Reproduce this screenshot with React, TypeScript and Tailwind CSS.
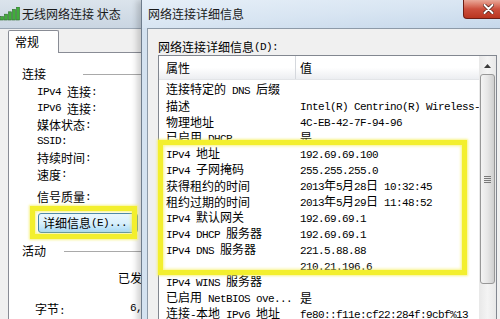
import React from 'react';

const Mix: React.FC<{ t: string }> = ({ t }) => {
  const parts = t.split(/([\x00-\x7f]+)/).filter(Boolean);
  return (
    <>
      {parts.map((p, i) =>
        /^[\x00-\x7f]+$/.test(p) ? (
          <span key={i} className="font-['Liberation_Mono'] text-[11px] tracking-[-0.6px]">
            {p}
          </span>
        ) : (
          <span key={i} className="text-[12px]">
            {p}
          </span>
        )
      )}
    </>
  );
};

const leftLabels = ['IPv4 连接:', 'IPv6 连接:', '媒体状态:', 'SSID:', '持续时间:', '速度:'];

const details: [string, string][] = [
  ['连接特定的 DNS 后缀', ''],
  ['描述', 'Intel(R) Centrino(R) Wireless-'],
  ['物理地址', '4C-EB-42-7F-94-96'],
  ['已启用 DHCP', '是'],
  ['IPv4 地址', '192.69.69.100'],
  ['IPv4 子网掩码', '255.255.255.0'],
  ['获得租约的时间', '2013年5月28日 10:32:45'],
  ['租约过期的时间', '2013年5月29日 11:48:52'],
  ['IPv4 默认网关', '192.69.69.1'],
  ['IPv4 DHCP 服务器', '192.69.69.1'],
  ['IPv4 DNS 服务器', '221.5.88.88'],
  ['', '210.21.196.6'],
  ['IPv4 WINS 服务器', ''],
  ['已启用 NetBIOS ove...', '是'],
  ['连接-本地 IPv6 地址', 'fe80::f11e:cf22:284f:9cbf%13'],
];

const SignalIcon = () => (
  <svg width="21" height="14" viewBox="0 0 21 14">
    {[0, 1, 2, 3, 4].map((i) => (
      <rect
        key={i}
        x={i * 4 + 0.5}
        y={12 - (i + 1) * 2.4}
        width="3"
        height={(i + 1) * 2.4 + 1}
        fill="#3fae3a"
        stroke="#2d6b2a"
        strokeWidth="0.6"
      />
    ))}
  </svg>
);

const StatusWindow = () => (
  <div className="absolute left-0 top-0 w-[180px] h-[340px] flex flex-col">
    {/* title */}
    <div className="h-[28px] flex items-center bg-gradient-to-b from-[#dbe4ec] to-[#cad6e2] text-[#1a1a1a]">
      <SignalIcon />
      <span className="ml-[1px] text-[12px] leading-none">无线网络连接 状态</span>
    </div>
    <div className="flex-1 flex flex-col bg-[#f0f0f0] border-t border-[#9aa6b4] pt-[1px] pl-[8px]">
      <div className="h-[23px] flex">
        <div className="w-[51px] h-[23px] border border-b-0 border-[#898c95] bg-white rounded-t-[2px] flex items-center pl-[6px] text-[12px] leading-none relative z-10">
          常规
        </div>
      </div>
      <div className="flex-1 -mt-px border border-[#898c95] bg-white flex flex-col whitespace-pre leading-none">
        <div className="mt-[13px] h-[16px] flex items-center pl-[13px]">
          <span className="w-[61px] text-[12px]">连接</span>
          <div className="flex-1 h-px bg-[#a9a9a9]" />
        </div>
        <div className="mt-[2px] flex flex-col pl-[28px]">
          {leftLabels.map((l) => (
            <div key={l} className="h-[16.5px] flex items-center">
              <Mix t={l} />
            </div>
          ))}
        </div>
        <div className="mt-[6px] h-[16px] flex items-center pl-[28px]">
          <Mix t="信号质量:" />
        </div>
        <div className="mt-[8px] ml-[29px] w-[100px] h-[20px] rounded-[3px] border border-[#3c7fb1] bg-gradient-to-b from-[#eaf6fd] via-[#d9f0fc] to-[#a7d9f5] flex items-center pl-[4px]">
          <Mix t="详细信息(E)..." />
        </div>
        <div className="mt-[10px] h-[16px] flex items-center pl-[13px]">
          <span className="w-[42px] text-[12px]">活动</span>
          <div className="flex-1 h-px bg-[#a9a9a9]" />
        </div>
        <div className="mt-[11px] h-[16px] flex items-center pl-[109px]">
          <span className="text-[12px]">已发送</span>
        </div>
        <div className="mt-[14px] h-[16px] flex items-center pl-[26px]">
          <span className="w-[95px]">
            <Mix t="字节:" />
          </span>
          <Mix t="6,520" />
        </div>
      </div>
    </div>
  </div>
);

const DetailsWindow = () => (
  <div className="absolute left-[141px] top-0 w-[380px] h-[340px] flex flex-col border-l border-[#6e7c8c] bg-gradient-to-r from-[#d4e2f0] to-[#c6d8ea] shadow-[-4px_0_6px_rgba(0,0,0,0.18)]">
    {/* title */}
    <div className="h-[28px] flex items-center pl-[6px] bg-gradient-to-br from-[#e6eff8] via-[#d8e5f2] to-[#c5d7ea] relative">
      <span className="text-[12px] leading-none text-[#1a1a1a]">网络连接详细信息</span>
      <div className="absolute left-[321px] top-0 w-[46px] h-[19px] rounded-bl-[4px] border border-t-0 border-[#6d1d14] bg-gradient-to-b from-[#e9a899] via-[#cc4f3d] to-[#b9351f] flex items-center pl-[19px]">
        <svg width="11" height="10" viewBox="0 0 11 10">
          <path d="M1.5 1 L9.5 9 M9.5 1 L1.5 9" stroke="#4a1a12" strokeWidth="3.4" strokeLinecap="round" />
          <path d="M1.5 1 L9.5 9 M9.5 1 L1.5 9" stroke="#ffffff" strokeWidth="2" strokeLinecap="round" />
        </svg>
      </div>
    </div>
    <div className="flex-1 flex pl-[5px]">
      <div className="flex-1 bg-[#f0f0f0] border-l border-t border-[#8d9aa8] flex flex-col pl-[10px] whitespace-pre leading-none">
        <div className="mt-[12px] h-[12px] flex items-center">
          <Mix t="网络连接详细信息(D):" />
        </div>
        <div className="mt-[2px] w-[339px] flex-1 border border-[#828790] bg-white flex">
          <div className="flex-1 flex flex-col overflow-hidden">
            <div className="h-[24px] shrink-0 flex items-center bg-gradient-to-b from-white via-white to-[#eceef1] border-b border-[#e3e5e8]">
              <span className="w-[136px] pl-[7px] text-[12px]">属性</span>
              <div className="w-px h-full bg-[#d5d8dd]" />
              <span className="pl-[4px] text-[12px]">值</span>
            </div>
            {details.map(([k, v], i) => (
              <div key={i} className="h-[16px] shrink-0 flex items-center">
                <div className="w-[141px] pl-[7px] overflow-hidden">
                  <Mix t={k} />
                </div>
                <div className="flex-1 overflow-hidden whitespace-nowrap">
                  <Mix t={v} />
                </div>
              </div>
            ))}
          </div>
          {/* scrollbar */}
          <div className="w-[17px] bg-gradient-to-r from-[#e8e8e8] via-[#f4f4f4] to-[#e8e8e8] flex flex-col px-[1px] pt-[1px]">
            <div className="h-[17px] flex items-center justify-center">
              <svg width="7" height="4" viewBox="0 0 7 4">
                <path d="M0 4 L3.5 0 L7 4 Z" fill="#3a3a3a" />
              </svg>
            </div>
            <div className="h-[210px] rounded-[3px] border border-[#989898] bg-gradient-to-r from-[#f4f4f4] via-[#e6e6e6] to-[#cfcfcf] flex items-center justify-center">
              <div className="flex flex-col gap-[1px]">
                {[0, 1, 2, 3].map((g) => (
                  <div key={g} className="w-[7px] h-px bg-[#7a7a7a]" />
                ))}
              </div>
            </div>
          </div>
        </div>
      </div>
    </div>
  </div>
);

export default function App() {
  return (
    <div className="relative w-[500px] h-[319px] overflow-hidden bg-white text-black font-['Noto_Sans_CJK_SC','Liberation_Sans',sans-serif]">
      <StatusWindow />
      <DetailsWindow />
      {/* highlight marks */}
      <div className="absolute left-[30px] top-[206px] w-[107px] h-[33px] border-[5px] border-[#f3ef2e] shadow-[0_0_2px_1px_rgba(245,240,90,0.7),inset_0_0_3px_1px_rgba(245,240,90,0.7)]" />
      <div className="absolute left-[158px] top-[140px] w-[309px] h-[135px] border-[5px] border-[#f3ef2e] shadow-[0_0_2px_1px_rgba(245,240,90,0.7),inset_0_0_3px_1px_rgba(245,240,90,0.7)]" />
    </div>
  );
}
